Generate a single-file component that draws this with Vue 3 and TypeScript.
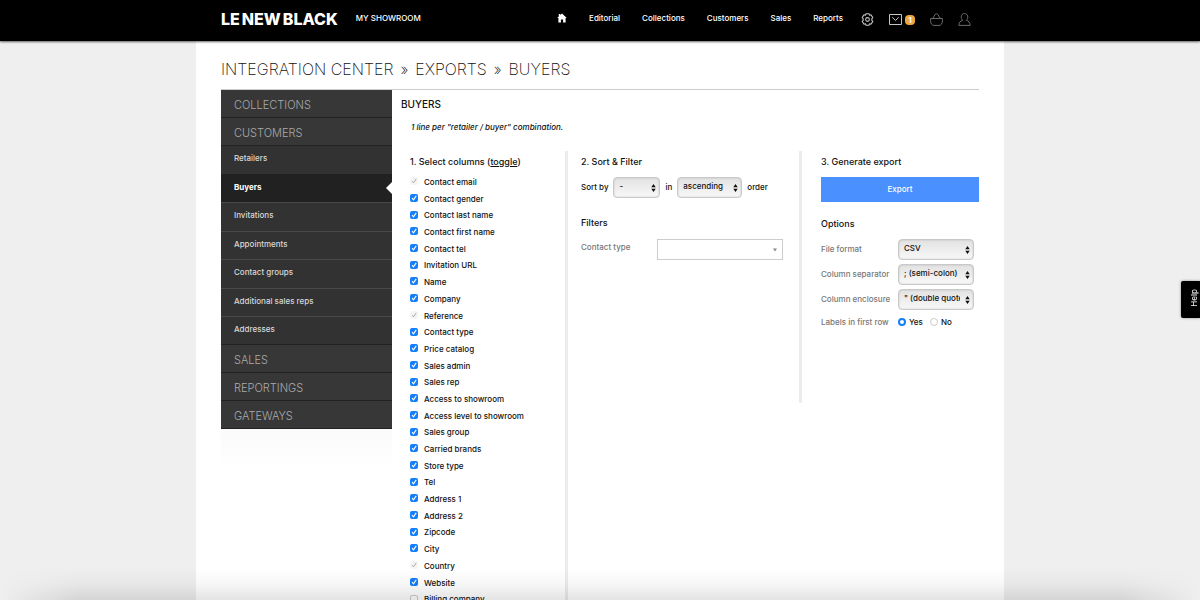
<script setup lang="ts">
import { ref } from 'vue'

interface Column {
  label: string
  checked: boolean
  locked?: boolean
}

const links = ['Editorial', 'Collections', 'Customers', 'Sales', 'Reports']
const customerPages = ['Retailers', 'Buyers', 'Invitations', 'Appointments', 'Contact groups', 'Additional sales reps', 'Addresses']
const lowerMenus = ['Sales', 'Reportings', 'Gateways']
const activePage = ref('Buyers')

const on = (label: string): Column => ({ label, checked: true })
const locked = (label: string): Column => ({ label, checked: true, locked: true })

const columns = ref<Column[]>([
  locked('Contact email'),
  on('Contact gender'),
  on('Contact last name'),
  on('Contact first name'),
  on('Contact tel'),
  on('Invitation URL'),
  on('Name'),
  on('Company'),
  locked('Reference'),
  on('Contact type'),
  on('Price catalog'),
  on('Sales admin'),
  on('Sales rep'),
  on('Access to showroom'),
  on('Access level to showroom'),
  on('Sales group'),
  on('Carried brands'),
  on('Store type'),
  on('Tel'),
  on('Address 1'),
  on('Address 2'),
  on('Zipcode'),
  on('City'),
  locked('Country'),
  on('Website'),
  { label: 'Billing company', checked: false },
])

function toggleAll() {
  const free = columns.value.filter((c) => !c.locked)
  const next = !free.every((c) => c.checked)
  free.forEach((c) => (c.checked = next))
}

const firstRow = ref('yes')
</script>

<template>
  <div class="page">
    <header class="topbar">
      <div class="topbar-inner">
        <a href="#" class="logo"><span>LE</span> <span>NEW</span> <span>BLACK</span></a>
        <a href="#" class="showroom">MY SHOWROOM</a>
        <nav class="nav">
          <a href="#" class="home" aria-label="Home">
            <svg width="10" height="10" viewBox="0 0 10 10"><path d="M5 .4 9.800 5H8.600v4.600H6.100V6.400H3.900v3.200H1.400V5H.2L1.800 3.500V1h1.500v1z" fill="#fff" /></svg>
          </a>
          <a v-for="l in links" :key="l" href="#">{{ l }}</a>
        </nav>
        <div class="tools">
          <a href="#" aria-label="Settings">
            <svg width="13" height="13" viewBox="0 0 12 12" fill="none" stroke="#c4c4c4" stroke-linejoin="round">
              <path d="M4.600.7h2.800l.4 1.300 1.400-.3L10.900 4.200l-.9.900v1.800l.9.900-1.700 2.500-1.400-.3-.4 1.300H4.600l-.4-1.300-1.400.3L1.100 7.800l.9-.9V5.100l-.9-.9 1.700-2.500 1.400.3z" />
              <circle cx="6" cy="6" r="1.700" />
            </svg>
          </a>
          <a href="#" class="mail" aria-label="Messages">
            <svg width="13" height="11" viewBox="0 0 13 11" fill="none" stroke="#c4c4c4"><path d="M.5.5h12v10H.5zM3.300 3.200 6.500 6.500 9.700 3.200" /></svg>
            <span class="badge">1</span>
          </a>
          <a href="#" aria-label="Basket">
            <svg width="13" height="13" viewBox="0 0 13 13" fill="none" stroke="#6c6c6c" stroke-linejoin="round"><path d="M.6 5.500h11.800v2.200c0 3-1.400 4.700-3.400 4.700H4C2 12.400.6 10.700.6 7.700zM2.800 5.300 5.300 1.300Q6.500.2 7.700 1.300l2.500 4" /></svg>
          </a>
          <a href="#" aria-label="Account">
            <svg width="13" height="13" viewBox="0 0 13 13" fill="none" stroke="#6c6c6c" stroke-linejoin="round"><path d="M4.700 7.300C2.400 5.200 2.700.6 6.500.6s4.100 4.600 1.800 6.700c2.200.8 3.800 1.800 3.900 5.100H.8c.1-3.300 1.700-4.300 3.900-5.100z" /></svg>
          </a>
        </div>
      </div>
    </header>

    <div class="sheet">
      <h1><span>INTEGRATION CENTER</span> <span>»</span> <span>EXPORTS</span> <span>»</span> <span>BUYERS</span></h1>
      <div class="body">
        <aside>
          <nav class="side">
            <a href="#" class="group">Collections</a>
            <a href="#" class="group">Customers</a>
            <ul>
              <li v-for="p in customerPages" :key="p" :class="{ active: p === activePage }">
                <a href="#" @click.prevent="activePage = p">{{ p }}</a>
              </li>
            </ul>
            <a v-for="m in lowerMenus" :key="m" href="#" class="group">{{ m }}</a>
          </nav>
          <div class="side-fade"></div>
        </aside>

        <main>
          <h2>BUYERS</h2>
          <p class="intro">1 line per "retailer / buyer" combination.</p>
          <div class="steps">
            <section class="step select-step">
              <h3>1. Select columns (<a href="#" @click.prevent="toggleAll">toggle</a>)</h3>
              <ul class="columns">
                <li v-for="c in columns" :key="c.label">
                  <label><input v-model="c.checked" type="checkbox" :disabled="c.locked" />{{ c.label }}</label>
                </li>
              </ul>
            </section>

            <section class="step sort-step">
              <h3>2. Sort &amp; Filter</h3>
              <div class="sort">
                <label for="sort-by">Sort by</label>
                <select id="sort-by" class="pick short"><option>-</option></select>
                <label for="sort-order">in</label>
                <select id="sort-order" class="pick medium"><option>ascending</option><option>descending</option></select>
                <span>order</span>
              </div>
              <h3>Filters</h3>
              <div class="filter">
                <label for="contact-type">Contact type</label>
                <select id="contact-type" class="flat"><option></option></select>
              </div>
            </section>

            <section class="step export-step">
              <h3>3. Generate export</h3>
              <button type="button" class="export">Export</button>
              <h3>Options</h3>
              <div class="option">
                <label for="format">File format</label>
                <select id="format" class="pick"><option>CSV</option></select>
              </div>
              <div class="option">
                <label for="separator">Column separator</label>
                <select id="separator" class="pick"><option>; (semi-colon)</option></select>
              </div>
              <div class="option">
                <label for="enclosure">Column enclosure</label>
                <select id="enclosure" class="pick"><option>" (double quote)</option></select>
              </div>
              <div class="option radios" role="radiogroup" aria-labelledby="first-row">
                <span id="first-row">Labels in first row</span>
                <label><input v-model="firstRow" type="radio" name="first-row" value="yes" />Yes</label>
                <label><input v-model="firstRow" type="radio" name="first-row" value="no" />No</label>
              </div>
            </section>
          </div>
        </main>
      </div>
    </div>

    <button type="button" class="help"><span>Help</span></button>
    <div class="bottom-shade"></div>
  </div>
</template>

<style>
body {
  margin: 0;
  background: #efefef;
}
</style>

<style scoped>
.page {
  height: 100vh;
  overflow: hidden;
  background: #efefef;
  color: #111;
  font: 500 8px/12px Inter, "Liberation Sans", sans-serif;
}
a {
  color: inherit;
  text-decoration: none;
}
ul {
  list-style: none;
  margin: 0;
  padding: 0;
}
h1, h2, h3, p {
  margin: 0;
}
select, button, input {
  font: inherit;
  color: inherit;
  margin: 0;
  border: 0;
  border-radius: 0;
}

.topbar {
  position: relative;
  background: #000;
  color: #fff;
  box-shadow: 0 1px 2px #0009;
}
.topbar-inner {
  max-width: 758px;
  height: 41px;
  margin: 0 auto;
  padding-bottom: 5px;
  box-sizing: border-box;
  display: flex;
  align-items: center;
}
.logo {
  display: flex;
  gap: 2px;
  font-size: 16px;
  font-weight: 800;
  line-height: 20px;
  padding-top: 2px;
}
.showroom {
  margin-left: 18px;
}
.nav {
  margin-left: auto;
  display: flex;
  align-items: center;
  gap: 22px;
}
.nav svg, .tools svg {
  display: block;
}
.tools {
  display: flex;
  align-items: center;
  gap: 15px;
  margin: 3px 8px 0 18px;
}
.mail {
  display: flex;
  align-items: center;
  gap: 3px;
}
.badge {
  width: 10px;
  height: 10px;
  line-height: 10px;
  border-radius: 4px;
  background: #eda53d;
  font-weight: 700;
  text-align: center;
}

.sheet {
  max-width: 758px;
  min-height: 100vh;
  margin: 0 auto;
  padding: 0 25px;
  background: #fff;
}
h1 {
  display: flex;
  gap: 7px;
  padding: 16px 0 8px;
  border-bottom: 1px solid #ccc;
  font-size: 16px;
  font-weight: 200;
  line-height: 24px;
}
.body {
  display: grid;
  grid-template-columns: 171px 1fr;
  align-items: start;
}

.side {
  background: #373737;
  border-bottom: 1px solid #222;
}
.group {
  display: block;
  padding: 3px 13px 0;
  line-height: 24px;
  border-bottom: 1px solid #222;
  font-size: 11px;
  font-weight: 300;
  text-transform: uppercase;
  color: #aaa;
}
.group:last-child {
  border-bottom: 0;
}
.side li {
  position: relative;
  padding: 0 13px 3px;
  line-height: 3.07;
  border-top: 1px solid #484848;
  background: #323232;
  color: #d8d8d8;
}
.side li a {
  display: block;
}
.side li:first-child {
  border-top: 0;
}
.side li:last-child {
  box-shadow: inset 0 -1px #222;
}
.side li.active {
  background: #212121;
  border-top-color: #212121;
  color: #fff;
  font-weight: 700;
}
.side li.active::after {
  content: "";
  position: absolute;
  right: 0;
  top: 7px;
  border: solid transparent;
  border-width: 6px 6px 6px 0;
  border-right-color: #fff;
}
.side-fade {
  height: 40px;
  background: linear-gradient(#fafafa, #fff);
}

main {
  padding-left: 9px;
}
h2 {
  padding-top: 6px;
  font-size: 10px;
  font-weight: 500;
  line-height: 16px;
}
.intro {
  padding: 9px 10px 18px;
  font-style: italic;
}
.steps {
  display: grid;
  grid-template-columns: 167px 234px 1fr;
  align-items: start;
}
.step {
  padding-top: 4px;
}
h3 {
  font-size: 9px;
  font-weight: 500;
  line-height: 14px;
}
h3 a {
  text-decoration: underline;
}
.select-step {
  padding-left: 9px;
  border-right: 3px solid #ececec;
}
.columns {
  padding-top: 5px;
  line-height: 2.087;
}
.columns label {
  display: flex;
  align-items: center;
}
.columns input {
  appearance: none;
  width: 8px;
  height: 8px;
  box-sizing: border-box;
  margin: 0 6px 2px 0;
  border: 1px solid #ccc;
  border-radius: 2px;
  background: #fff center / 8px 8px no-repeat;
}
.columns input:checked {
  border: 0;
  background-color: #147efb;
  background-image: url("data:image/svg+xml,%3Csvg xmlns='http://www.w3.org/2000/svg' viewBox='0 0 8 8'%3E%3Cpath d='M2 4.200 3.500 5.900 6.200 1.900' fill='none' stroke='white' stroke-width='1.100'/%3E%3C/svg%3E");
}
.columns input:disabled {
  background-color: #f5f5f5;
  background-image: url("data:image/svg+xml,%3Csvg xmlns='http://www.w3.org/2000/svg' viewBox='0 0 8 8'%3E%3Cpath d='M2 4.200 3.500 5.900 6.200 1.900' fill='none' stroke='%23aaa'/%3E%3C/svg%3E");
}

.pick {
  appearance: none;
  box-sizing: border-box;
  width: 76px;
  height: 21px;
  padding: 0 13px 4px 5px;
  border: 1px solid #c9c9c9;
  border-radius: 4px;
  box-shadow: inset 0 0 2px #0003;
  background:
    url("data:image/svg+xml,%3Csvg xmlns='http://www.w3.org/2000/svg' viewBox='0 0 5 9'%3E%3Cpath d='M0 3.600 2.500 0 5 3.600zM0 5.400 2.500 9 5 5.400z' fill='%23111'/%3E%3C/svg%3E") right 3px top 6px / 5px 8px no-repeat,
    linear-gradient(#e2e2e2, #f8f8f8);
}
.sort-step {
  padding-left: 13px;
  padding-bottom: 143px;
  border-right: 3px solid #ececec;
}
.sort {
  display: flex;
  align-items: center;
  gap: 5px;
  padding: 8px 0 18px;
}
.sort label, .sort span {
  padding-bottom: 2px;
}
.short {
  width: 47px;
}
.medium {
  width: 65px;
}
.filter {
  display: flex;
  justify-content: space-between;
  padding: 9px 16px 0 0;
  color: #777;
}
.filter label {
  padding-top: 2px;
}
.flat {
  appearance: none;
  box-sizing: border-box;
  width: 126px;
  height: 21px;
  border: 1px solid #ccc;
  background: #fff url("data:image/svg+xml,%3Csvg xmlns='http://www.w3.org/2000/svg' viewBox='0 0 5 4'%3E%3Cpath d='M0 0h5L2.500 4z' fill='%23888'/%3E%3C/svg%3E") right 5px center / 4px 4px no-repeat;
}

.export-step {
  padding-left: 19px;
}
.export {
  display: block;
  width: 100%;
  height: 25px;
  margin: 8px 0 15px;
  padding: 0 0 2px;
  background: #4a90ff;
  color: #fff;
}
.option {
  display: grid;
  grid-template-columns: 77px 1fr;
  align-items: center;
  margin-bottom: 4px;
  color: #777;
}
.option > label, .option > span {
  padding-bottom: 2px;
}
h3 + .option {
  margin-top: 8px;
}
.option select {
  color: #111;
}
.radios {
  grid-template-columns: 77px auto 1fr;
  margin-top: 6px;
}
.radios label {
  display: flex;
  align-items: center;
  margin-right: 7px;
  color: #111;
}
.radios input {
  appearance: none;
  box-sizing: border-box;
  width: 8px;
  height: 8px;
  margin-right: 3px;
  border: 1px solid #ccc;
  border-radius: 50%;
  background: #fff;
}
.radios input:checked {
  border: 2px solid #147efb;
}

.help {
  position: fixed;
  right: 0;
  top: 281px;
  width: 19px;
  height: 37px;
  padding: 0 0 0 6px;
  border-radius: 2px 0 0 2px;
  background: #000;
  box-shadow: 0 0 3px #0006;
  color: #eee;
}
.help span {
  writing-mode: vertical-rl;
  rotate: 180deg;
}
.bottom-shade {
  position: fixed;
  left: 0;
  right: 0;
  bottom: 0;
  height: 32px;
  pointer-events: none;
  background: linear-gradient(#0000, #00000008 50%, #0000001c);
  mask-image: linear-gradient(90deg, transparent, #000 80px, #000 calc(100% - 80px), transparent);
}
</style>
